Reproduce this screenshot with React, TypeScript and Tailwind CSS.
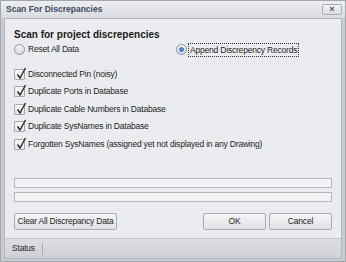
const font = { fontFamily: '"Liberation Sans", Arial, sans-serif' };

const CheckRow = ({ label }: { label: string }) => (
    <div className="flex items-center h-[17.5px]">
        <div className="relative w-[11px] h-[11px] border border-[#a3a7ae] bg-gradient-to-b from-[#f6f6f8] to-[#e4e5e9] rounded-[1px]">
            <svg className="absolute left-[1px] top-[-3px]" width="11" height="13" viewBox="0 0 11 13">
                <path d="M1.5 7.5 L4 11 L9.5 1" fill="none" stroke="#222" strokeWidth="1.3" />
            </svg>
        </div>
        <span className="ml-[3px] text-[8.5px] tracking-[-0.2px] text-[#1e1e1e] whitespace-nowrap">{label}</span>
    </div>
);

const Radio = ({ checked }: { checked?: boolean }) => (
    <div className="w-[11px] h-[11px] rounded-full border border-[#8d929a] bg-gradient-to-b from-[#f6f6f8] to-[#d9dbe0] flex items-center justify-center">
        {checked && <div className="w-[5px] h-[5px] rounded-full bg-[#5c8fd6] border border-[#3f6fb8]" />}
    </div>
);

const Btn = ({ label, className }: { label: string; className?: string }) => (
    <div className={`h-[17px] flex items-center justify-center border border-[#a8abb2] rounded-[2px] bg-gradient-to-b from-[#f5f5f7] to-[#e1e2e6] text-[8.5px] tracking-[-0.2px] text-[#1e1e1e] whitespace-nowrap ${className ?? ''}`}>
        {label}
    </div>
);

export default function App() {
    return (
        <div style={font} className="w-[346px] h-[262px] bg-[#a3a6ad] p-px">
            <div className="w-full h-full flex flex-col bg-[#c9cbd1]">
                {/* Title bar */}
                <div className="h-[17px] flex items-center justify-between pl-[5px] pr-[3px] bg-gradient-to-b from-[#eceef1] to-[#d9dbe0]">
                    <span className="text-[8.5px] font-bold text-[#3e4a5c]">Scan For Discrepancies</span>
                    <div className="w-[20px] h-[11px] border border-[#a9adb5] rounded-[2px] bg-gradient-to-b from-[#f3f3f5] to-[#dcdee3] flex items-center justify-center text-[#555] text-[9px] font-bold leading-none">
                        ×
                    </div>
                </div>

                {/* Body */}
                <div className="flex-1 flex flex-col mx-[3px] border border-[#b4b7be] bg-[#ebecf0]">
                    <div className="flex-1 flex flex-col px-[9px] pt-[9px]">
                        <div className="text-[10px] font-bold text-[#1a1a1a] leading-[13px]">Scan for project discrepencies</div>
                        <div className="flex items-center h-[16px] mt-[1px]">
                            <div className="flex items-center w-[162px]">
                                <Radio />
                                <span className="ml-[3px] text-[8.5px] tracking-[-0.2px] text-[#1e1e1e]">Reset All Data</span>
                            </div>
                            <div className="flex items-center">
                                <Radio checked />
                                <span className="ml-[1px] px-[1px] border border-dotted border-[#333] text-[8.5px] tracking-[-0.2px] text-[#1e1e1e] leading-[12px]">
                                    Append Discrepency Records
                                </span>
                            </div>
                        </div>

                        <div className="flex flex-col mt-[8px]">
                            <CheckRow label="Disconnected Pin (noisy)" />
                            <CheckRow label="Duplicate Ports in Database" />
                            <CheckRow label="Duplicate Cable Numbers in Database" />
                            <CheckRow label="Duplicate SysNames in Database" />
                            <CheckRow label="Forgotten SysNames (assigned yet not displayed in any Drawing)" />
                        </div>

                        <div className="flex flex-col gap-[4px] mt-[25px]">
                            <div className="h-[10px] border border-[#b5b8be] bg-[#f2f3f5]" />
                            <div className="h-[10px] border border-[#b5b8be] bg-[#f2f3f5]" />
                        </div>

                        <div className="flex items-center justify-between mt-[11px]">
                            <Btn label="Clear All Discrepancy Data" className="w-[103px]" />
                            <div className="flex gap-[3px]">
                                <Btn label="OK" className="w-[63px]" />
                                <Btn label="Cancel" className="w-[63px]" />
                            </div>
                        </div>
                    </div>

                    {/* Status bar */}
                    <div className="h-[20px] mt-[8px] flex items-center bg-gradient-to-b from-[#dcdee3] to-[#cfd1d7] border-t border-[#c4c6cc]">
                        <span className="text-[8.5px] tracking-[-0.2px] text-[#2a2a2a] pl-[7px] pr-[7px]">Status</span>
                        <div className="w-px h-[12px] bg-[#a9acb3]" />
                    </div>
                </div>
                <div className="h-[2px]" />
            </div>
        </div>
    );
}
